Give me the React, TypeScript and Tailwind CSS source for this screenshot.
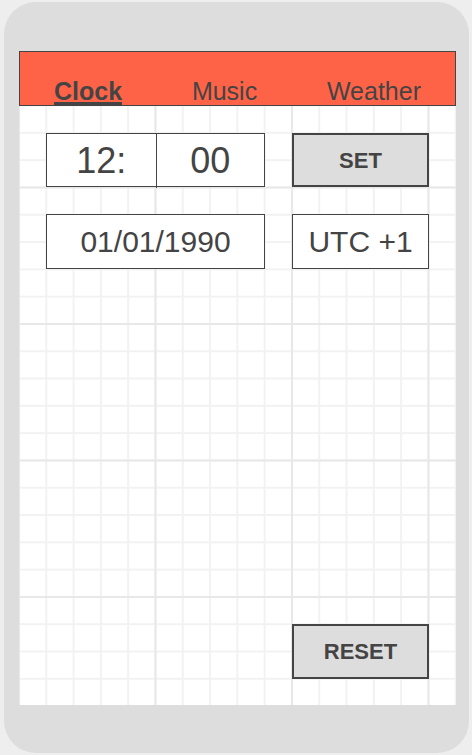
import React from "react";

const tabs = [
  { label: "Clock", active: true },
  { label: "Music", active: false },
  { label: "Weather", active: false },
];

// graph-paper backdrop: minor cell 27.3px, heavier line every 5 cells
const gridBg =
  "[background-image:linear-gradient(to_right,#e8e8e8_2px,transparent_2px),linear-gradient(to_bottom,#e8e8e8_2px,transparent_2px),linear-gradient(to_right,#f2f2f2_2px,transparent_2px),linear-gradient(to_bottom,#f2f2f2_2px,transparent_2px)] [background-size:136.5px_136.5px,136.5px_136.5px,27.3px_27.3px,27.3px_27.3px] [background-position:-1px_-1px]";

const Header = () => (
  <div className="flex h-[55px] items-end justify-between border border-[#444] bg-[#ff6347] px-[34px]">
    {tabs.map(({ label, active }) => (
      <span
        key={label}
        className={`border-b-[3px] text-[25px] leading-[21px] text-[#444] ${
          active ? "border-[#444] font-bold" : "border-transparent"
        }`}
      >
        {label}
      </span>
    ))}
  </div>
);

const App = () => {
  return (
    <div className="h-[755px] w-[472px] overflow-hidden bg-[#eeeeee] pl-[4px] pt-[2px] font-['Liberation_Sans',Arial,sans-serif] text-[#444]">
      <div className="flex h-[751px] w-[465px] flex-col rounded-[32px] bg-[#dddddd] pb-[48px] pl-[15px] pr-[13px] pt-[49px]">
        <div className={`flex flex-1 flex-col bg-white ${gridBg}`}>
          <Header />

          <div className="flex flex-1 flex-col px-[27px] pb-[26px] pt-[27px]">
            <div className="flex gap-[27px]">
              <div className="grid h-[54px] w-[219px] grid-cols-2 border border-[#444] bg-white">
                <div className="flex items-center justify-center text-[36px]">12:</div>
                <div className="flex items-center justify-center border-l border-[#444] text-[36px]">00</div>
              </div>
              <button className="flex h-[54px] w-[137px] items-center justify-center border-2 border-[#444] bg-[#dddddd] text-[22px] font-bold">
                SET
              </button>
            </div>

            <div className="mt-[27px] flex gap-[27px]">
              <div className="flex h-[55px] w-[219px] items-center justify-center border border-[#444] bg-white text-[30px]">
                01/01/1990
              </div>
              <div className="flex h-[55px] w-[137px] items-center justify-center border border-[#444] bg-white text-[30px]">
                UTC +1
              </div>
            </div>

            <div className="mt-auto flex justify-end">
              <button className="flex h-[55px] w-[137px] items-center justify-center border-2 border-[#444] bg-[#dddddd] text-[22px] font-bold">
                RESET
              </button>
            </div>
          </div>
        </div>
      </div>
    </div>
  );
};

export default App;
